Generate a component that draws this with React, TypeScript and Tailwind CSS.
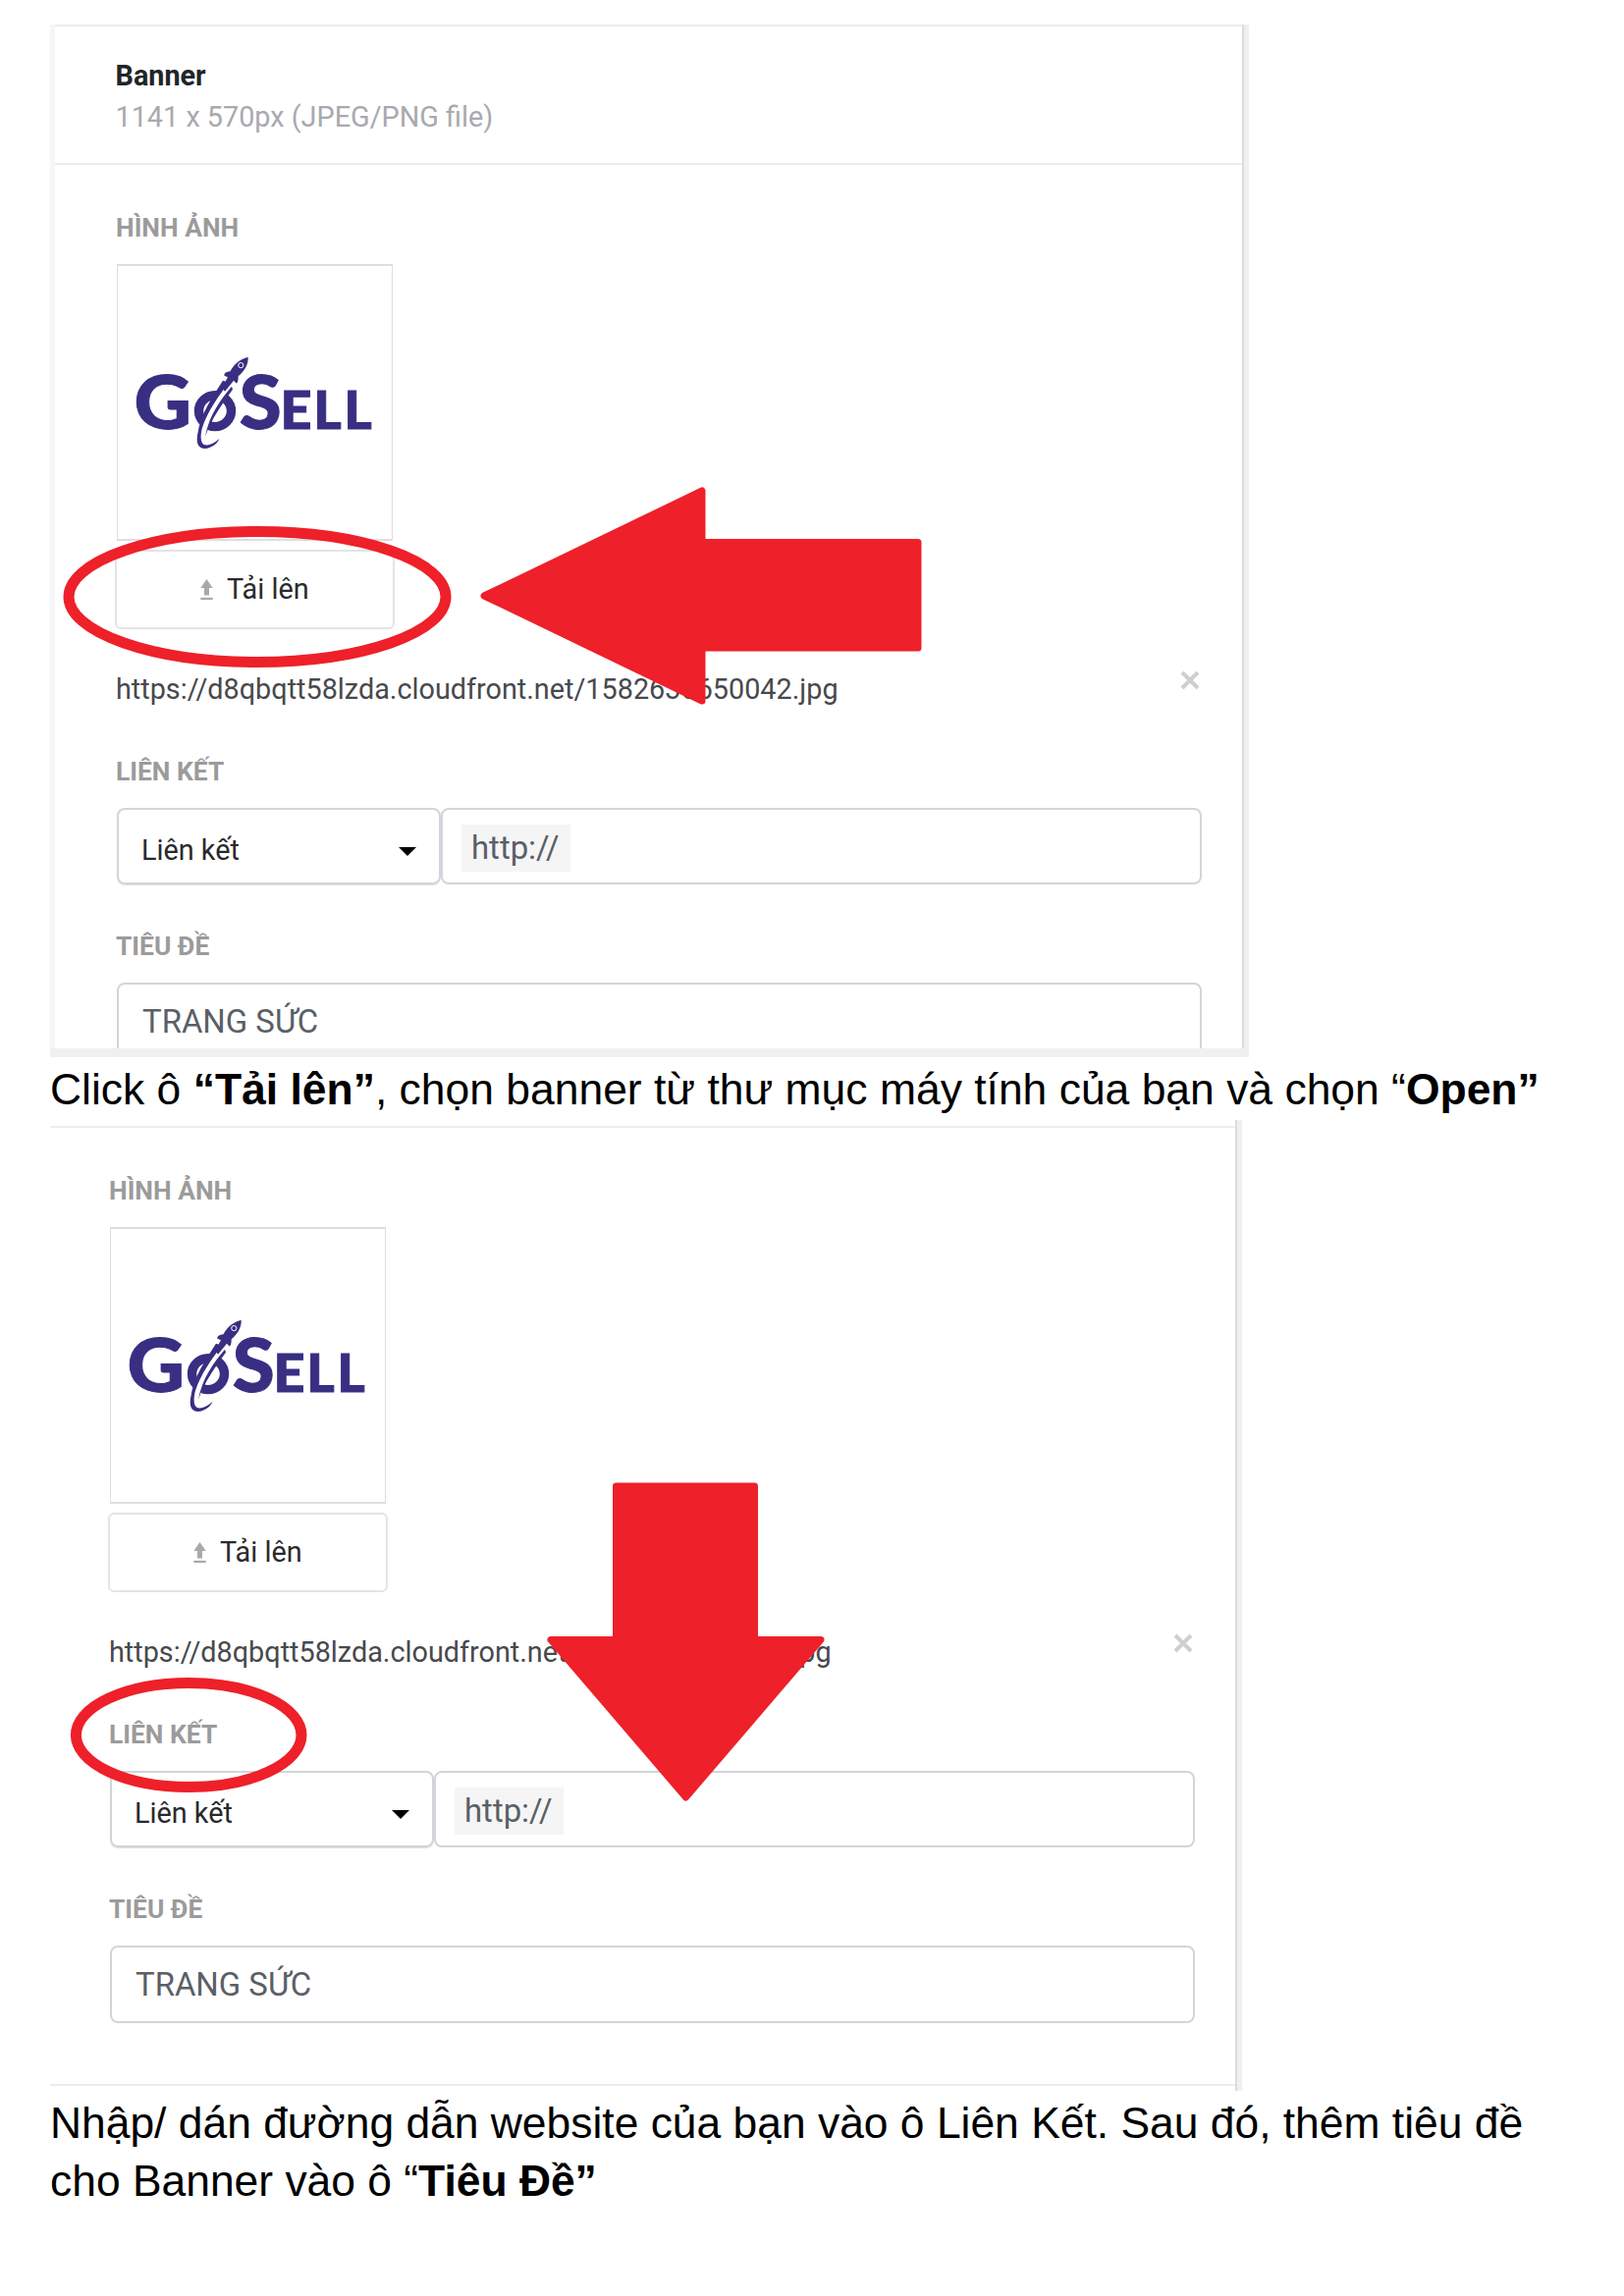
function GoSellLogo() {
  return (
    <svg viewBox="0 0 280 280" className="h-[280px] w-[280px]" aria-label="GoSell">
      <g transform="translate(0 -2.2)">
        <g fill="#382f83" stroke="#382f83" strokeWidth="1" fontFamily="Lato" fontWeight="900">
          <text x="16.6" y="168.6" fontSize="76" textLength="58.5" lengthAdjust="spacingAndGlyphs">G</text>
          <text x="123.8" y="168.6" fontSize="76" textLength="43" lengthAdjust="spacingAndGlyphs">S</text>
          <text x="165.6" y="168.6" fontSize="54" textLength="32" lengthAdjust="spacingAndGlyphs">E</text>
          <text x="199.6" y="168.6" fontSize="54">L</text>
          <text x="230.6" y="168.6" fontSize="54">L</text>
        </g>
        <ellipse cx="99" cy="149.8" rx="16.5" ry="16" fill="none" stroke="#382f83" strokeWidth="9.4" />
        <path d="M113 120 C100 136 88 154 84 172 L89 175 C96 154 108 140 119 125Z" fill="#fff" />
        <path
          d="M107 119 C97 135 84 152 81 175 C79 188 87 190 94 187 C99 185 102 182 103.500 178 C97 184 91 186 87.500 184 C84 182 84 174 86 167 C91 151 103 134 113 121Z"
          fill="#382f83"
        />
        <path d="M116 125 C105 138 93 154 89 176 C95 158 107 142 117 128Z" fill="#382f83" />
        <path
          d="M132.700 95 C124 97 118 103 114.500 109.500 C109.500 110 108 112 108.500 114 L112 115.500 L106 126 L109 130 L118 119 L121 122 C123 119 122.500 117 122.700 114.500 C129 109 133 103 132.700 95Z"
          fill="#382f83"
        />
        <circle cx="125.300" cy="103.300" r="2.600" fill="none" stroke="#fff" strokeWidth="1" />
      </g>
    </svg>
  );
}

function UploadIcon() {
  return (
    <svg viewBox="0 0 13 22" className="h-[22px] w-[13px]" fill="#a9a9ac">
      <path d="M6.500 0 L12.700 9 H9 V16.500 H4 V9 H0.300Z" />
      <rect x="0.300" y="18.800" width="12.400" height="2.200" />
    </svg>
  );
}

function FieldLabel({ children }: { children: string }) {
  return <div className="-ml-px h-10 text-[26.4px] leading-10 font-bold text-[#9b9b9b]">{children}</div>;
}

function BannerForm() {
  return (
    <div className="w-[1105px] pt-[44px]">
      <FieldLabel>HÌNH ẢNH</FieldLabel>
      <div className="mt-[17px] h-[282px] w-[281px] border border-y-2 border-[#dedede]">
        <GoSellLogo />
      </div>
      <button className="mt-[9px] -ml-[2px] flex h-[81px] w-[285px] items-center rounded-md border-2 border-[#e4e4e6] pt-px pl-[85px] text-[28.8px] text-[#2a2a2c]">
        <UploadIcon />
        <span className="ml-[14px]">Tải lên</span>
      </button>
      <div className="mt-[41px] flex h-10 justify-between text-[28.8px] leading-10 whitespace-nowrap text-[#47494d]">
        <span className="-ml-px">https://d8qbqtt58lzda.cloudfront.net/1582635650042.jpg</span>
        <svg viewBox="0 0 20 20" className="mt-px mr-[2px] h-5 w-5" stroke="#cfcfd1" strokeWidth="4">
          <path d="M2 2 L18 18 M18 2 L2 18" />
        </svg>
      </div>
      <div className="mt-[44px]">
        <FieldLabel>LIÊN KẾT</FieldLabel>
      </div>
      <div className="mt-[17px] flex h-[78px]">
        <div className="flex w-[330px] items-center justify-between rounded-lg border-2 border-[#d1d5db] pt-2.5 pr-[23px] pl-[23px] text-[28.8px] text-[#29292b] shadow-[0_1px_1px_#dcdfe3]">
          <span>Liên kết</span>
          <svg viewBox="0 0 18 9" className="h-[9px] w-[18px]">
            <path d="M0 0 H18 L9 9Z" fill="#000" />
          </svg>
        </div>
        <div className="flex flex-1 items-center rounded-lg border-2 border-[#d1d5db] pt-[3px] pl-[19px]">
          <span className="h-[48px] w-[111px] bg-[#f5f5f6] pl-[10px] text-[32.9px] leading-[48px] text-[#5a5f66]">http://</span>
        </div>
      </div>
      <div className="mt-[43px]">
        <FieldLabel>TIÊU ĐỀ</FieldLabel>
      </div>
      <div className="mt-[17px] flex h-[79px] items-center rounded-lg border-2 border-[#d1d5db] pl-[24px] text-[32.9px] text-[#5a5f66]">
        TRANG SỨC
      </div>
    </div>
  );
}

function EdgeShadow() {
  return <div className="w-[7px] shrink-0 border-l-2 border-[#dcdcdd] bg-[#f0f0f1]" />;
}

export default function App() {
  return (
    <div className="h-[2339px] w-[1654px] overflow-hidden bg-white pt-[25px] pl-[51px] font-[Roboto,sans-serif]">
      <section className="relative h-[1052px] w-[1221px]">
        <div className="flex h-[1043px] overflow-hidden">
          <div className="w-[5px] shrink-0 bg-[#f6f6f8]" />
          <div className="flex-1 border-t-2 border-[#ebedf2]">
            <header className="h-[141px] border-b-2 border-[#ebecf3] pt-[29px] pl-[61.5px]">
              <h1 className="text-[28.8px] leading-[42px] font-bold text-[#212529]">Banner</h1>
              <p className="text-[28.8px] leading-[42px] text-[#a9a9ad]">1141 x 570px (JPEG/PNG file)</p>
            </header>
            <div className="pl-[63px]">
              <BannerForm />
            </div>
          </div>
          <EdgeShadow />
        </div>
        <div className="h-[9px] bg-[#f0f0f0]" />
        <svg viewBox="0 0 1221 1052" className="absolute inset-0 h-[1052px] w-[1221px]">
          <ellipse cx="211" cy="583" rx="192" ry="66.500" fill="none" stroke="#ee2029" strokeWidth="11" />
          <path
            d="M442 582 L664 475 V527.500 H884 V635 H664 V689Z"
            fill="#ee2029"
            stroke="#ee2029"
            strokeWidth="7"
            strokeLinejoin="round"
          />
        </svg>
      </section>

      <p className="mt-[3px] h-[61px] font-['Liberation_Sans',sans-serif] text-[44.45px] leading-[59px] whitespace-nowrap text-black">
        Click ô <b>“Tải lên”</b>, chọn banner từ thư mục máy tính của bạn và chọn “<b>Open”</b>
      </p>

      <section className="relative flex h-[989px] w-[1214px]">
        <div className="flex-1 pt-[6px]">
          <div className="h-[978px] border-y-2 border-[#ebecf0] pl-[61px]">
            <BannerForm />
          </div>
        </div>
        <EdgeShadow />
        <svg viewBox="0 0 1214 989" className="absolute inset-0 h-[989px] w-[1214px]">
          <ellipse cx="141.200" cy="626.500" rx="114.800" ry="53" fill="none" stroke="#ee2029" strokeWidth="11" />
          <path
            d="M576.500 373 H717.500 V529.500 H785 L647.500 690 L510 529.500 H576.500Z"
            fill="#ee2029"
            stroke="#ee2029"
            strokeWidth="7"
            strokeLinejoin="round"
          />
        </svg>
      </section>

      <p className="mt-[3px] font-['Liberation_Sans',sans-serif] text-[44.4px] leading-[59px] whitespace-nowrap text-black">
        Nhập/ dán đường dẫn website của bạn vào ô Liên Kết. Sau đó, thêm tiêu đề
        <br />
        cho Banner vào ô “<b>Tiêu Đề”</b>
      </p>
    </div>
  );
}
